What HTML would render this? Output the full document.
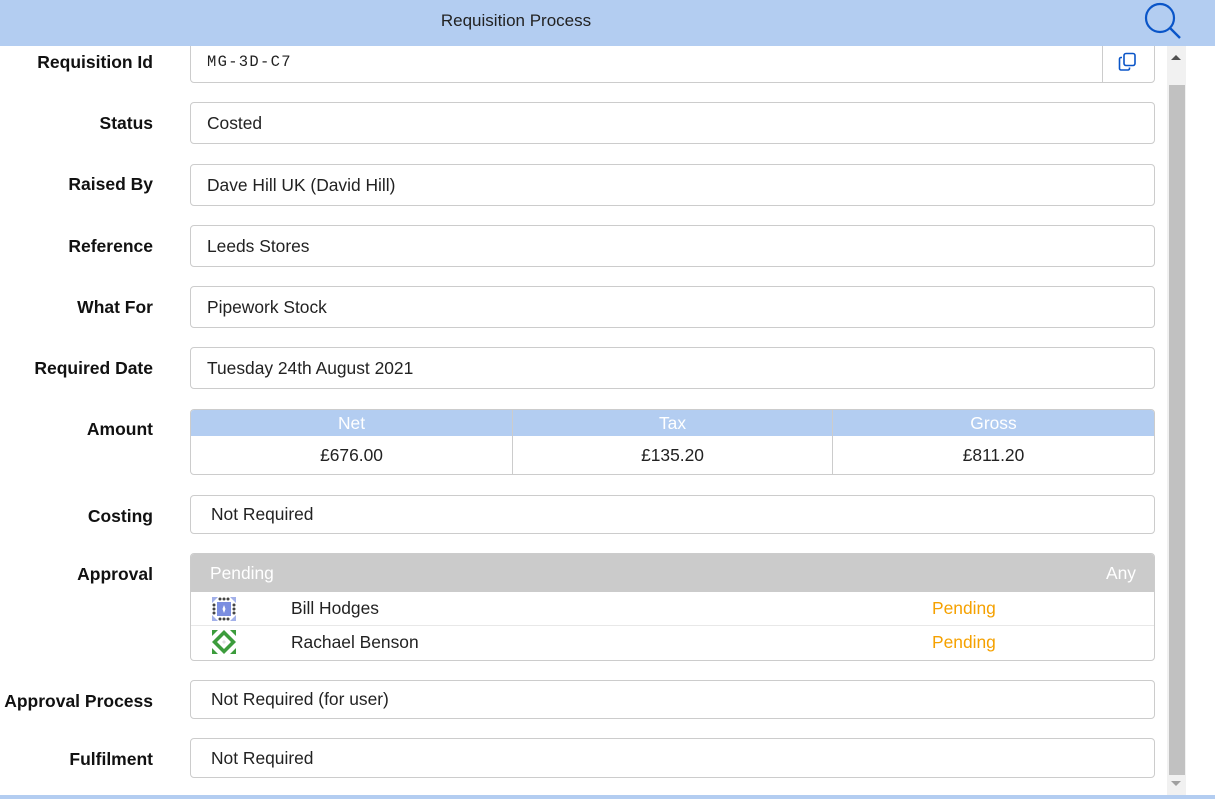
<!DOCTYPE html><html><head><style>
body{margin:0;width:1215px;height:799px;overflow:hidden;background:#fff;font-family:"Liberation Sans",Arial,sans-serif;position:relative;color:#222}
.hdr{position:absolute;left:0;top:0;width:1215px;height:46px;background:#b3cdf1;z-index:2}
.hdr .t{position:absolute;left:0;width:1032px;text-align:center;top:11px;font-size:17px;color:#222}
.lbl{position:absolute;right:1062px;font-weight:bold;font-size:17.5px;color:#111;white-space:nowrap}
.f{position:absolute;left:190px;width:963px;border:1px solid #ccc;border-radius:4px;box-sizing:border-box;font-size:17.4px;padding-left:16px;display:flex;align-items:center}
.sb{position:absolute;left:1167px;top:46px;width:19px;height:749px;background:#f1f1f1}
.th{position:absolute;left:1169px;top:85px;width:16px;height:690px;background:#c1c1c1}
.amt{position:absolute;left:190px;top:409px;width:965px;height:66px;border:1px solid #ccc;border-radius:4px;box-sizing:border-box;overflow:hidden}
.amt div{position:absolute;text-align:center;font-size:17.4px}
</style></head><body>
<div class="hdr"><div class="t">Requisition Process</div>
<svg style="position:absolute;left:1140px;top:0px" width="45" height="42" viewBox="0 0 45 42"><circle cx="20" cy="18" r="14" fill="none" stroke="#0a55c8" stroke-width="2.2"/><line x1="30" y1="28" x2="40" y2="38" stroke="#0a55c8" stroke-width="2.4"/></svg></div>
<div class="sb"></div><div class="th"></div>
<div style="position:absolute;left:1171px;top:55px;width:0;height:0;border-left:5px solid transparent;border-right:5px solid transparent;border-bottom:5px solid #505050"></div>
<div style="position:absolute;left:1171px;top:781px;width:0;height:0;border-left:5px solid transparent;border-right:5px solid transparent;border-top:5px solid #a0a0a0"></div>
<div style="position:absolute;left:0;top:795px;width:1215px;height:4px;background:#b3cdf1"></div>

<div class="lbl" style="top:52px">Requisition Id</div>
<div class="f" style="top:40px;height:43px;width:965px;font-family:'Liberation Mono',monospace;font-size:15.5px;letter-spacing:1.3px">MG-3D-C7</div>
<div style="position:absolute;left:1102px;top:46px;width:1px;height:37px;background:#ccc"></div>
<svg style="position:absolute;left:1118px;top:52px" width="20" height="20" viewBox="0 0 20 20"><rect x="6" y="1.5" width="11" height="12" rx="2" fill="none" stroke="#0a55c8" stroke-width="1.6"/><path d="M4 5.5 H3 a1.5 1.5 0 0 0 -1.5 1.5 V16.5 a1.5 1.5 0 0 0 1.5 1.5 H10 a1.5 1.5 0 0 0 1.5 -1.5 V15.5" fill="none" stroke="#0a55c8" stroke-width="1.6"/></svg>

<div class="lbl" style="top:113px">Status</div><div class="f" style="top:102px;height:42px;width:965px">Costed</div>
<div class="lbl" style="top:174px">Raised By</div><div class="f" style="top:164px;height:42px;width:965px">Dave Hill UK (David Hill)</div>
<div class="lbl" style="top:236px">Reference</div><div class="f" style="top:225px;height:42px;width:965px">Leeds Stores</div>
<div class="lbl" style="top:297px">What For</div><div class="f" style="top:286px;height:42px;width:965px">Pipework Stock</div>
<div class="lbl" style="top:358px">Required Date</div><div class="f" style="top:347px;height:42px;width:965px">Tuesday 24th August 2021</div>
<div class="lbl" style="top:419px">Amount</div>
<div class="amt"><div style="left:0;top:0;width:965px;height:26px;background:#b3cdf1"></div>
<div style="left:0;top:3px;width:321px;color:#fff">Net</div><div style="left:321px;top:3px;width:321px;color:#fff">Tax</div><div style="left:642px;top:3px;width:321px;color:#fff">Gross</div>
<div style="left:321px;top:0;width:1px;height:66px;background:#ccc"></div><div style="left:641px;top:0;width:1px;height:66px;background:#ccc"></div>
<div style="left:0;top:35px;width:321px">£676.00</div><div style="left:321px;top:35px;width:321px">£135.20</div><div style="left:642px;top:35px;width:321px">£811.20</div></div>
<div class="lbl" style="top:506px">Costing</div><div class="f" style="top:495px;height:39px;width:965px;padding-left:20px">Not Required</div>
<div class="lbl" style="top:564px">Approval</div>
<div style="position:absolute;left:190px;top:553px;width:965px;height:108px;border:1px solid #ccc;border-radius:4px;box-sizing:border-box;overflow:hidden;font-size:17.4px">
<div style="position:absolute;left:0;top:0;width:965px;height:38px;background:#cbcbcb;color:#fff"><span style="position:absolute;left:19px;top:9px">Pending</span><span style="position:absolute;right:20px;top:9px">Any</span></div>
<div style="position:absolute;left:0;top:71px;width:965px;height:1px;background:#e8e8e8"></div>
<svg style="position:absolute;left:20px;top:42px" width="26" height="26" viewBox="0 0 26 26"><rect x="6" y="6" width="14" height="14" fill="#7b8ee0"/><path d="M1 1h6L1 7zM25 1v6L19 1zM1 25v-6l6 6zM25 25h-6l6-6z" fill="#7b8ee0" opacity=".7"/><g fill="#444"><circle cx="9" cy="3" r="1.5"/><circle cx="13" cy="3" r="1.5"/><circle cx="17" cy="3" r="1.5"/><circle cx="9" cy="23" r="1.5"/><circle cx="13" cy="23" r="1.5"/><circle cx="17" cy="23" r="1.5"/><circle cx="3" cy="9" r="1.5"/><circle cx="3" cy="13" r="1.5"/><circle cx="3" cy="17" r="1.5"/><circle cx="23" cy="9" r="1.5"/><circle cx="23" cy="13" r="1.5"/><circle cx="23" cy="17" r="1.5"/></g><path d="M13 9l1.5 4L13 17l-1.5-4z" fill="#fff"/></svg>
<span style="position:absolute;left:100px;top:44px;color:#222">Bill Hodges</span><span style="position:absolute;left:741px;top:44px;color:#f5a100">Pending</span>
<svg style="position:absolute;left:20px;top:75px" width="26" height="26" viewBox="0 0 26 26"><path d="M13 1L25 13 13 25 1 13z" fill="#3c9c3c"/><path d="M13 6L20 13 13 20 6 13z" fill="#fff"/><path d="M13 11l2 2-2 2-2-2z" fill="#ddd"/><path d="M1 1h6L1 7zM25 1v6L19 1zM1 25v-6l6 6zM25 25h-6l6-6z" fill="#3c9c3c"/></svg>
<span style="position:absolute;left:100px;top:78px;color:#222">Rachael Benson</span><span style="position:absolute;left:741px;top:78px;color:#f5a100">Pending</span></div>
<div class="lbl" style="top:691px">Approval Process</div><div class="f" style="top:680px;height:39px;width:965px;padding-left:20px">Not Required (for user)</div>
<div class="lbl" style="top:749px">Fulfilment</div><div class="f" style="top:738px;height:40px;width:965px;padding-left:20px">Not Required</div>
</body></html>
